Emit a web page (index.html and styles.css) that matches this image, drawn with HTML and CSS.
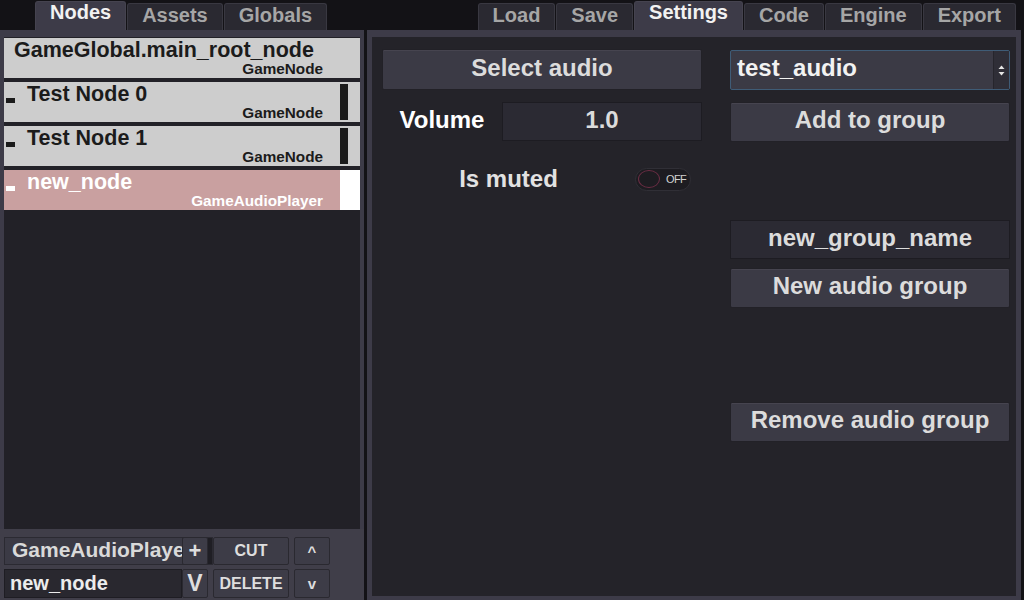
FILE: index.html
```html
<!DOCTYPE html>
<html lang="en">
<head>
    <meta charset="UTF-8">
    <meta name="viewport" content="width=device-width, initial-scale=1.0">
    <title>Game Editor - Audio Settings</title>
    <link rel="stylesheet" href="styles.css">
</head>
<body>
    <div class="app">
        <header class="tabbar">
            <nav class="tabs tabs-left">
                <span class="tab active">Nodes</span>
                <span class="tab">Assets</span>
                <span class="tab">Globals</span>
            </nav>
            <nav class="tabs tabs-right">
                <span class="tab">Load</span>
                <span class="tab">Save</span>
                <span class="tab active">Settings</span>
                <span class="tab">Code</span>
                <span class="tab">Engine</span>
                <span class="tab">Export</span>
            </nav>
        </header>

        <main class="workspace">
            <section class="tree-panel">
                <div class="node-list">
                    <div class="node-row root">
                        <div class="node-info">
                            <div class="node-name">GameGlobal.main_root_node</div>
                            <div class="node-type">GameNode</div>
                        </div>
                        <div class="node-marker"></div>
                    </div>
                    <div class="node-row">
                        <div class="node-fold"><span class="dash"></span></div>
                        <div class="node-info">
                            <div class="node-name">Test Node 0</div>
                            <div class="node-type">GameNode</div>
                        </div>
                        <div class="node-marker"><span class="bar"></span></div>
                    </div>
                    <div class="node-row">
                        <div class="node-fold"><span class="dash"></span></div>
                        <div class="node-info">
                            <div class="node-name">Test Node 1</div>
                            <div class="node-type">GameNode</div>
                        </div>
                        <div class="node-marker"><span class="bar"></span></div>
                    </div>
                    <div class="node-row selected">
                        <div class="node-fold"><span class="dash"></span></div>
                        <div class="node-info">
                            <div class="node-name">new_node</div>
                            <div class="node-type">GameAudioPlayer</div>
                        </div>
                        <div class="node-marker"><span class="block"></span></div>
                    </div>
                </div>

                <div class="node-tools">
                    <div class="type-select">
                        <span class="type-value">GameAudioPlayer</span>
                        <span class="type-arrow">&#x2b0d;</span>
                    </div>
                    <button class="tool-btn add-btn">+</button>
                    <button class="tool-btn cut-btn">CUT</button>
                    <button class="tool-btn up-btn">^</button>
                    <div class="name-input">new_node</div>
                    <button class="tool-btn paste-btn">V</button>
                    <button class="tool-btn delete-btn">DELETE</button>
                    <button class="tool-btn down-btn">v</button>
                </div>
            </section>

            <section class="settings-panel">
                <div class="settings-body">
                    <div class="col col-left">
                        <button class="btn select-audio">Select audio</button>
                        <div class="field-row volume-row">
                            <span class="field-label">Volume</span>
                            <div class="text-input">1.0</div>
                        </div>
                        <div class="field-row muted-row">
                            <span class="field-label">Is muted</span>
                            <div class="switch">
                                <span class="knob"></span>
                                <span class="switch-text">OFF</span>
                            </div>
                        </div>
                    </div>

                    <div class="col col-right">
                        <div class="dropdown">
                            <span class="dropdown-value">test_audio</span>
                            <span class="dropdown-arrow">
                                <svg width="7" height="11" viewBox="0 0 7 11">
                                    <path d="M3.5 0.5 L6.5 4 L0.5 4 Z" fill="#e6e6e6"/>
                                    <path d="M3.5 10.5 L6.5 7 L0.5 7 Z" fill="#e6e6e6"/>
                                </svg>
                            </span>
                        </div>
                        <button class="btn add-group">Add to group</button>
                        <div class="text-input group-name">new_group_name</div>
                        <button class="btn new-group">New audio group</button>
                        <button class="btn remove-group">Remove audio group</button>
                    </div>
                </div>
            </section>
        </main>
    </div>
</body>
</html>
```

FILE: styles.css
```css
* {
    box-sizing: border-box;
    margin: 0;
    padding: 0;
}

body {
    background-color: #131216;
    font-family: "Liberation Sans", Arial, sans-serif;
    font-weight: bold;
    width: 1024px;
    height: 600px;
    overflow: hidden;
}

button {
    font-family: inherit;
    font-weight: bold;
}

/* top tab strips */

.tabbar {
    display: flex;
    justify-content: space-between;
    align-items: flex-end;
    height: 30px;
}

.tabs {
    display: flex;
    align-items: flex-end;
    gap: 1px;
}

.tabs-left {
    margin-left: 35px;
}

.tabs-right {
    margin-right: 8px;
}

.tab {
    height: 27px;
    padding: 1px 14px 0;
    border: 1px solid #393841;
    border-bottom: none;
    border-radius: 3px 3px 0 0;
    background-color: #2a2931;
    color: #a6a6a6;
    font-size: 20px;
    line-height: 20px;
}

.tab.active {
    height: 29px;
    padding-top: 0;
    background-color: #3d3b48;
    border-color: #45434f;
    color: #f2f2f2;
}

/* panels */

.workspace {
    display: flex;
    gap: 3px;
    height: 570px;
}

.tree-panel {
    width: 364px;
    display: flex;
    flex-direction: column;
    background-color: #3d3b48;
    padding-top: 7px;
}

.node-list {
    flex: 1;
    margin: 0 4px;
    padding-top: 1px;
    background-color: #222127;
}

.node-row {
    display: flex;
    height: 40px;
    margin-bottom: 4px;
    background-color: #cdcdcd;
    color: #1b1b1b;
}

.node-row.root {
    padding-left: 10px;
}

.node-row.selected {
    background-color: #c9a0a0;
    color: #ffffff;
}

.node-fold {
    width: 23px;
    padding: 16px 0 0 2px;
}

.dash {
    display: block;
    width: 9px;
    height: 5px;
    background-color: #1b1b1b;
}

.selected .dash {
    background-color: #ffffff;
}

.node-info {
    flex: 1;
    padding: 1px 17px 0 0;
}

.node-name {
    font-size: 21.5px;
    line-height: 22px;
}

.node-type {
    font-size: 15.3px;
    line-height: 16px;
    text-align: right;
}

.node-marker {
    width: 20px;
}

.node-marker .bar {
    display: block;
    width: 8px;
    height: 36px;
    margin-top: 2px;
    background-color: #1b1b1b;
}

.node-marker .block {
    display: block;
    height: 100%;
    background-color: #ffffff;
}

/* bottom tools under the tree */

.node-tools {
    height: 71px;
    padding: 8px 0 0 4px;
    background-color: #403e49;
    display: grid;
    grid-template-columns: 178px 26px 5px 76px 5px 36px;
    grid-template-rows: 28px 29px;
    row-gap: 4px;
}

.type-select {
    grid-column: 1 / 4;
    grid-row: 1;
    display: flex;
    align-items: center;
    justify-content: space-between;
    overflow: hidden;
    background-color: #3b3a45;
    border: 1px solid #2b2a32;
    color: #d9d9d9;
    font-size: 21px;
}

.type-value {
    width: 177px;
    padding: 0 0 2px 7px;
    white-space: nowrap;
    overflow: hidden;
}

.type-arrow {
    width: 16px;
    height: 100%;
    background-color: #1f1e24;
    color: #c8c8c8;
    font-size: 12px;
    line-height: 26px;
    text-align: center;
}

.tool-btn {
    background-color: #3d3c47;
    border: 1px solid #2a2930;
    border-radius: 2px;
    color: #dedede;
    font-size: 16px;
}

.add-btn {
    grid-column: 2;
    grid-row: 1;
    font-size: 22px;
    line-height: 20px;
}

.cut-btn {
    grid-column: 4;
    grid-row: 1;
}

.up-btn {
    grid-column: 6;
    grid-row: 1;
    font-size: 15px;
}

.name-input {
    grid-column: 1;
    grid-row: 2;
    padding-left: 5px;
    background-color: #29282f;
    border: 1px solid #1e1d23;
    color: #ececec;
    font-size: 20px;
    line-height: 26px;
}

.paste-btn {
    grid-column: 2;
    grid-row: 2;
    font-size: 23px;
}

.delete-btn {
    grid-column: 4;
    grid-row: 2;
}

.down-btn {
    grid-column: 6;
    grid-row: 2;
    font-size: 15px;
}

/* settings panel */

.settings-panel {
    width: 654px;
    padding: 7px 5px 4px;
    background-color: #3d3b48;
}

.settings-body {
    display: flex;
    gap: 28px;
    height: 100%;
    padding: 0 6px 0 10px;
    background-color: #242329;
}

.col {
    display: flex;
    flex-direction: column;
    flex-shrink: 0;
}

.col-left {
    width: 320px;
}

.col-right {
    width: 280px;
}

.btn {
    height: 40px;
    padding-bottom: 4px;
    background-color: #3b3a45;
    border: 1px solid #222127;
    border-radius: 2px;
    box-shadow: inset 0 1px 0 #46444f;
    color: #dcdcdc;
    font-size: 24px;
}

.select-audio {
    height: 41px;
    margin-top: 12px;
}

.field-row {
    display: flex;
    align-items: center;
}

.field-label {
    padding-bottom: 4px;
    text-align: center;
    font-size: 24px;
}

.volume-row {
    height: 39px;
    margin-top: 12px;
}

.volume-row .field-label {
    width: 120px;
    color: #ffffff;
}

.volume-row .text-input {
    flex: 1;
    height: 100%;
}

.text-input {
    display: flex;
    align-items: center;
    justify-content: center;
    padding-bottom: 4px;
    background-color: #2b2a33;
    border: 1px solid #1d1c22;
    color: #dcdcdc;
    font-size: 24px;
}

.muted-row {
    height: 40px;
    margin-top: 18px;
}

.muted-row .field-label {
    width: 253px;
    padding-bottom: 0;
    color: #e2e2e2;
}

.switch {
    display: flex;
    align-items: center;
    width: 56px;
    height: 23px;
    padding-left: 2px;
    border: 1px solid #302f36;
    border-radius: 12px;
    background-color: #1d1c21;
}

.knob {
    width: 22px;
    height: 18px;
    border: 1.5px solid #6b2d44;
    border-radius: 50%;
}

.switch-text {
    margin-left: 6px;
    color: #d2d2d2;
    font-size: 11px;
    font-weight: normal;
    letter-spacing: -0.6px;
}

.dropdown {
    display: flex;
    height: 40px;
    margin-top: 13px;
    background-color: #3b3a45;
    border: 1px solid #3f5c77;
    border-radius: 2px;
}

.dropdown-value {
    flex: 1;
    padding-left: 6px;
    color: #f2f2f2;
    font-size: 24px;
    line-height: 34px;
}

.dropdown-arrow {
    display: flex;
    align-items: center;
    justify-content: center;
    width: 16px;
    background-color: #2f2e37;
    border-left: 1px solid #26252c;
}

.add-group {
    margin-top: 12px;
}

.group-name {
    height: 39px;
    margin-top: 78px;
}

.new-group {
    margin-top: 9px;
}

.remove-group {
    margin-top: 94px;
}
```
